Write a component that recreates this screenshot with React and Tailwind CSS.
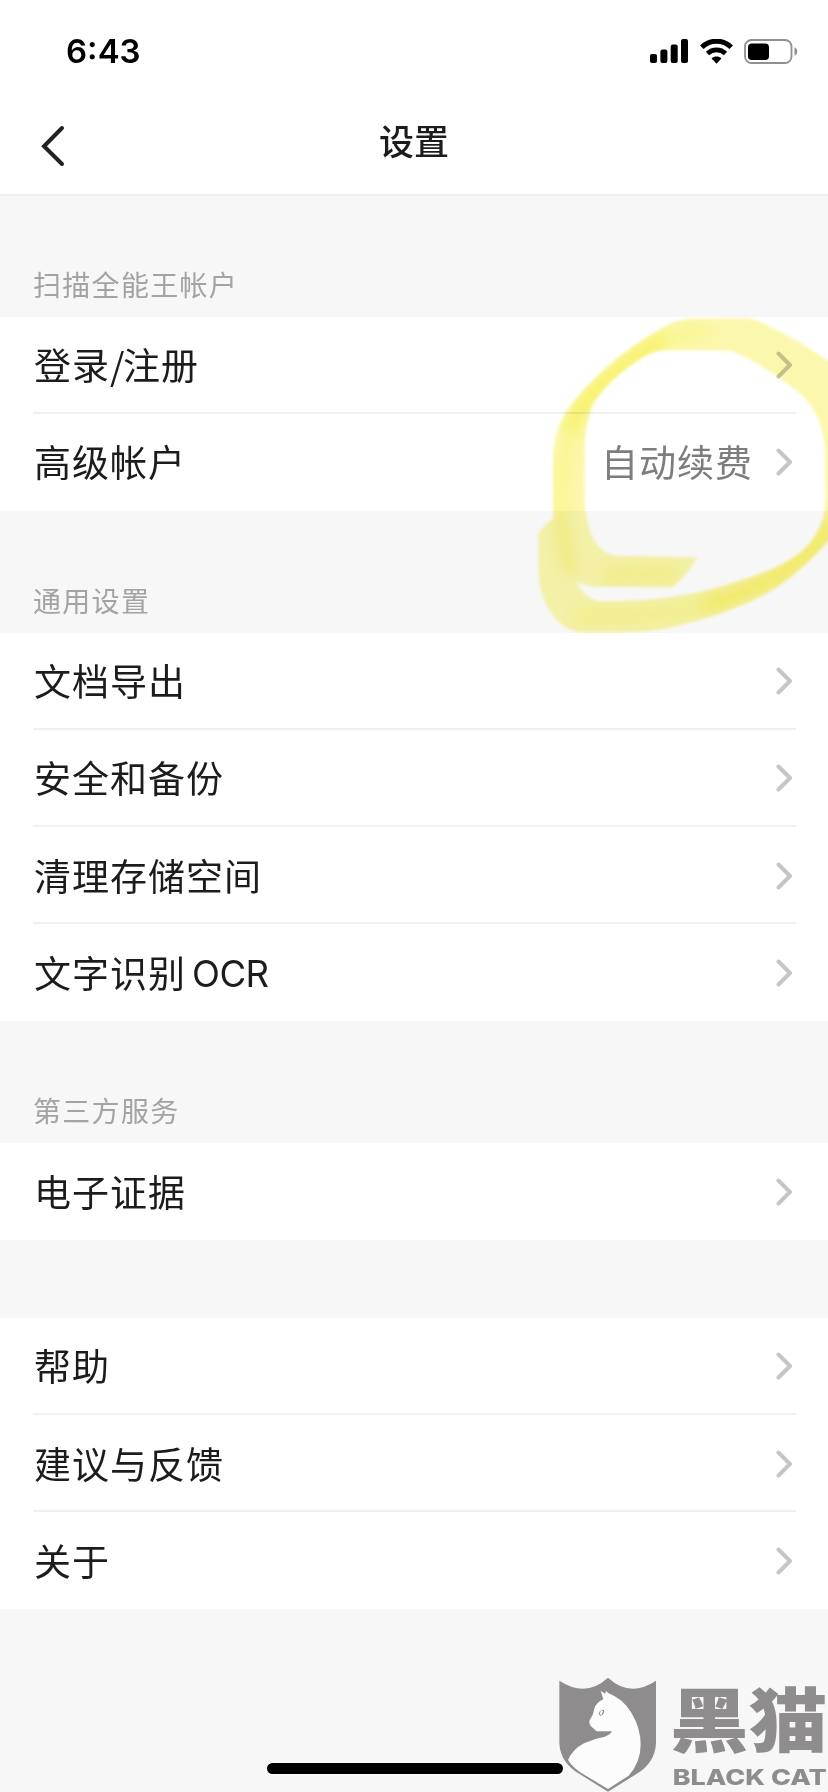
import React from "react";

const sections = [
  {
    title: "扫描全能王帐户",
    rows: [
      {
        label: (
          <>
            登录<span className="tracking-[-1.5px]">/</span>注册
          </>
        ),
      },
      { label: "高级帐户", value: "自动续费" },
    ],
  },
  {
    title: "通用设置",
    rows: [
      { label: "文档导出" },
      { label: "安全和备份" },
      { label: "清理存储空间" },
      { label: "文字识别", latin: "OCR" },
    ],
  },
  {
    title: "第三方服务",
    rows: [{ label: "电子证据" }],
  },
  {
    rows: [{ label: "帮助" }, { label: "建议与反馈" }, { label: "关于" }],
  },
];

const StatusBar = () => (
  <div className="flex h-[102px] items-center justify-between pl-[66px] pr-[30px]">
    <span className="font-['Inter',sans-serif] text-[33px] leading-none font-semibold text-black">
      6:43
    </span>
    <div className="flex items-center gap-[11px]">
      <svg width="39" height="24" viewBox="0 0 39 24">
        <rect x="0" y="15" width="7" height="9" rx="2" />
        <rect x="10.4" y="10.5" width="7" height="13.5" rx="2" />
        <rect x="20.7" y="5.5" width="7" height="18.5" rx="2" />
        <rect x="31" y="0" width="7" height="24" rx="2" />
      </svg>
      <svg width="33" height="25" viewBox="0 0 33 25">
        <path
          d="M1.8 8.2 C10 0.2 23 0.2 31.2 8.2"
          fill="none"
          stroke="#000"
          strokeWidth="5"
        />
        <path
          d="M7.5 14.4 C12.5 9.6 20.5 9.6 25.5 14.4"
          fill="none"
          stroke="#000"
          strokeWidth="4.8"
        />
        <path d="M11.6 19.4 C14.4 17 18.6 17 21.4 19.4 L16.5 24.8 Z" />
      </svg>
      <svg width="54" height="25" viewBox="0 0 54 25">
        <rect
          x="1"
          y="1"
          width="46.5"
          height="23"
          rx="6.5"
          fill="none"
          stroke="#8f8f8f"
          strokeWidth="1.8"
        />
        <rect x="4" y="4.5" width="21" height="16.5" rx="3.8" />
        <path d="M50.5 8.3 C54.2 9.8 54.2 15.2 50.5 16.7 Z" fill="#8f8f8f" />
      </svg>
    </div>
  </div>
);

const Header = () => (
  <div className="grid h-[92px] grid-cols-[1fr_auto_1fr] items-center pb-[14px]">
    <svg className="mt-[10px] ml-[41px]" width="24" height="42" viewBox="0 0 24 42">
      <path
        d="M21 3 L3 21.3 L21 39"
        fill="none"
        stroke="#222"
        strokeWidth="4"
        strokeLinecap="round"
      />
    </svg>
    <h1 className="pb-[4px] text-[35px] leading-none font-medium text-[#1c1c1c]">
      设置
    </h1>
  </div>
);

const Chevron = () => (
  <svg className="mt-[2px]" width="17" height="28" viewBox="0 0 17 28">
    <path
      d="M2.5 2.5 L14 14 L2.5 25.5"
      fill="none"
      stroke="#c6c6c8"
      strokeWidth="4"
      strokeLinecap="round"
      strokeLinejoin="round"
    />
  </svg>
);

const Row = ({ row }) => (
  <div className="group pl-[33px] pr-[32px]">
    <div className="flex h-[97.15px] items-center border-b-2 border-[#f0f0f0] pr-[3px] pl-px group-last:border-transparent">
      <span className="text-[37px] leading-[40px] tracking-[1px] text-[#1c1c1c]">
        {row.label}
      </span>
      {row.latin && (
        <span className="ml-[6px] pt-[4px] font-['Inter',sans-serif] text-[36.5px] leading-[40px] tracking-[-0.5px] text-[#1c1c1c]">
          {row.latin}
        </span>
      )}
      <span className="ml-auto pr-[23px] text-[37px] leading-[40px] tracking-[1px] text-[#7d7d7d]">
        {row.value}
      </span>
      <Chevron />
    </div>
  </div>
);

const Section = ({ section }) => (
  <section>
    {section.title ? (
      <h2 className="flex h-[122px] items-end px-[33px] pb-[18px] text-[28px] leading-[30px] tracking-[1.3px] text-[#a3a3a3]">
        {section.title}
      </h2>
    ) : (
      <div className="h-[77.4px]" />
    )}
    <div className="bg-white">
      {section.rows.map((row, index) => (
        <Row key={index} row={row} />
      ))}
    </div>
  </section>
);

// Highlighter pen circle around the renewal entry
const Marker = () => (
  <svg
    className="pointer-events-none absolute top-[300px] left-[528px] mix-blend-multiply"
    width="300"
    height="350"
    viewBox="0 0 900 1050"
  >
    <defs>
      <filter
        id="soft"
        x="-10%"
        y="-10%"
        width="120%"
        height="120%"
        colorInterpolationFilters="sRGB"
      >
        <feGaussianBlur stdDeviation="5" />
      </filter>
      <filter
        id="glow"
        x="-30%"
        y="-30%"
        width="160%"
        height="160%"
        colorInterpolationFilters="sRGB"
      >
        <feGaussianBlur stdDeviation="20" />
      </filter>
      <path
        id="loop"
        d="M508 772 Q480 825 432 862 L200 860 Q150 858 130 825 Q75 740 75 630 L75 470 Q80 370 140 300 Q250 170 400 85 Q440 58 490 56 L650 55 Q690 58 730 82 Q830 130 930 205 L930 690 Q850 790 750 860 Q640 930 470 972 Q390 995 300 997 L160 997 Q110 995 70 940 Q30 880 32 810 L32 700 Q55 665 85 652 L128 670 L130 780 Q145 905 230 905 L350 900 Q500 890 640 840 Q760 805 820 755 Q892 690 892 600 L890 440 Q880 320 790 260 Q700 190 610 152 L420 150 Q380 150 340 175 Q210 260 185 340 Q170 390 170 450 L170 600 Q180 768 280 768 Z"
      />
      <clipPath id="inside">
        <use href="#loop" />
      </clipPath>
    </defs>
    <g filter="url(#soft)">
      <use href="#loop" fill="#fbf8ae" />
      <g clipPath="url(#inside)">
        <g filter="url(#glow)" fill="none" strokeLinecap="round">
          <path
            d="M520 90 Q330 130 165 315 Q110 400 95 600"
            stroke="#faf692"
            strokeWidth="46"
          />
          <path
            d="M400 118 Q270 190 170 310 Q145 345 130 380"
            stroke="#f7f05c"
            strokeWidth="36"
          />
          <path
            d="M930 640 Q840 780 700 855 Q560 920 380 945 L160 950"
            stroke="#faf694"
            strokeWidth="60"
          />
          <path
            d="M930 650 Q850 765 760 820 Q660 875 540 915"
            stroke="#f8f05a"
            strokeWidth="34"
          />
          <path
            d="M102 640 Q100 740 130 810"
            stroke="#f8f27c"
            strokeWidth="34"
          />
          <path d="M240 825 L430 820" stroke="#faf592" strokeWidth="60" />
        </g>
      </g>
    </g>
  </svg>
);

const BlackCat = () => (
  <svg
    className="absolute right-0 bottom-0"
    width="272"
    height="134"
    viewBox="0 -48 816 402"
    fill="#8f8c8d"
  >
    <path d="M10 20 Q90 72 156 11 Q222 72 300 20 L300 206 Q298 266 240 301 L156 353 L72 301 Q12 266 10 206 Z" />
    <path
      d="M134 50 L147 59 L150 51 L158 58 Q200 74 226 116 Q254 162 254 212 Q254 264 218 305 L156 345 L76 297 Q50 280 36 258 Q50 226 84 208 Q112 194 146 188 Q164 182 168 172 L122 172 L104 156 Q98 146 101 139 Q112 124 115 104 Q120 86 142 76 Z"
      fill="#fcfcfc"
    />
    <path d="M128 119 Q130 109 142 107 Q147 109 143 118 Q141 125 134 125 Q130 124 128 119 Z" />
    <path d="M131 120 L135 109 L141 111 L137 123 Z" fill="#fcfcfc" />
    <text
      x="342"
      y="220"
      fontFamily="'Noto Sans CJK SC', sans-serif"
      fontWeight="900"
      fontSize="212"
      textLength="472"
      lengthAdjust="spacingAndGlyphs"
    >
      黑猫
    </text>
    <text
      x="350"
      y="333"
      fontFamily="Inter, sans-serif"
      fontWeight="800"
      fontSize="66"
      textLength="462"
      lengthAdjust="spacingAndGlyphs"
    >
      BLACK CAT
    </text>
  </svg>
);

const App = () => {
  return (
    <div className="relative flex h-[1792px] w-[828px] flex-col overflow-hidden bg-[#f7f7f7] font-['Noto_Sans_CJK_SC',sans-serif]">
      <div className="mb-[-1.5px] border-b-2 border-[#f0f0f0] bg-white">
        <StatusBar />
        <Header />
      </div>
      {sections.map((section, index) => (
        <Section key={index} section={section} />
      ))}
      <div className="mt-auto mb-[18px] ml-[267px] h-[11px] w-[296px] rounded-full bg-black ring-1 ring-white" />
      <Marker />
      <BlackCat />
    </div>
  );
};

export default App;
